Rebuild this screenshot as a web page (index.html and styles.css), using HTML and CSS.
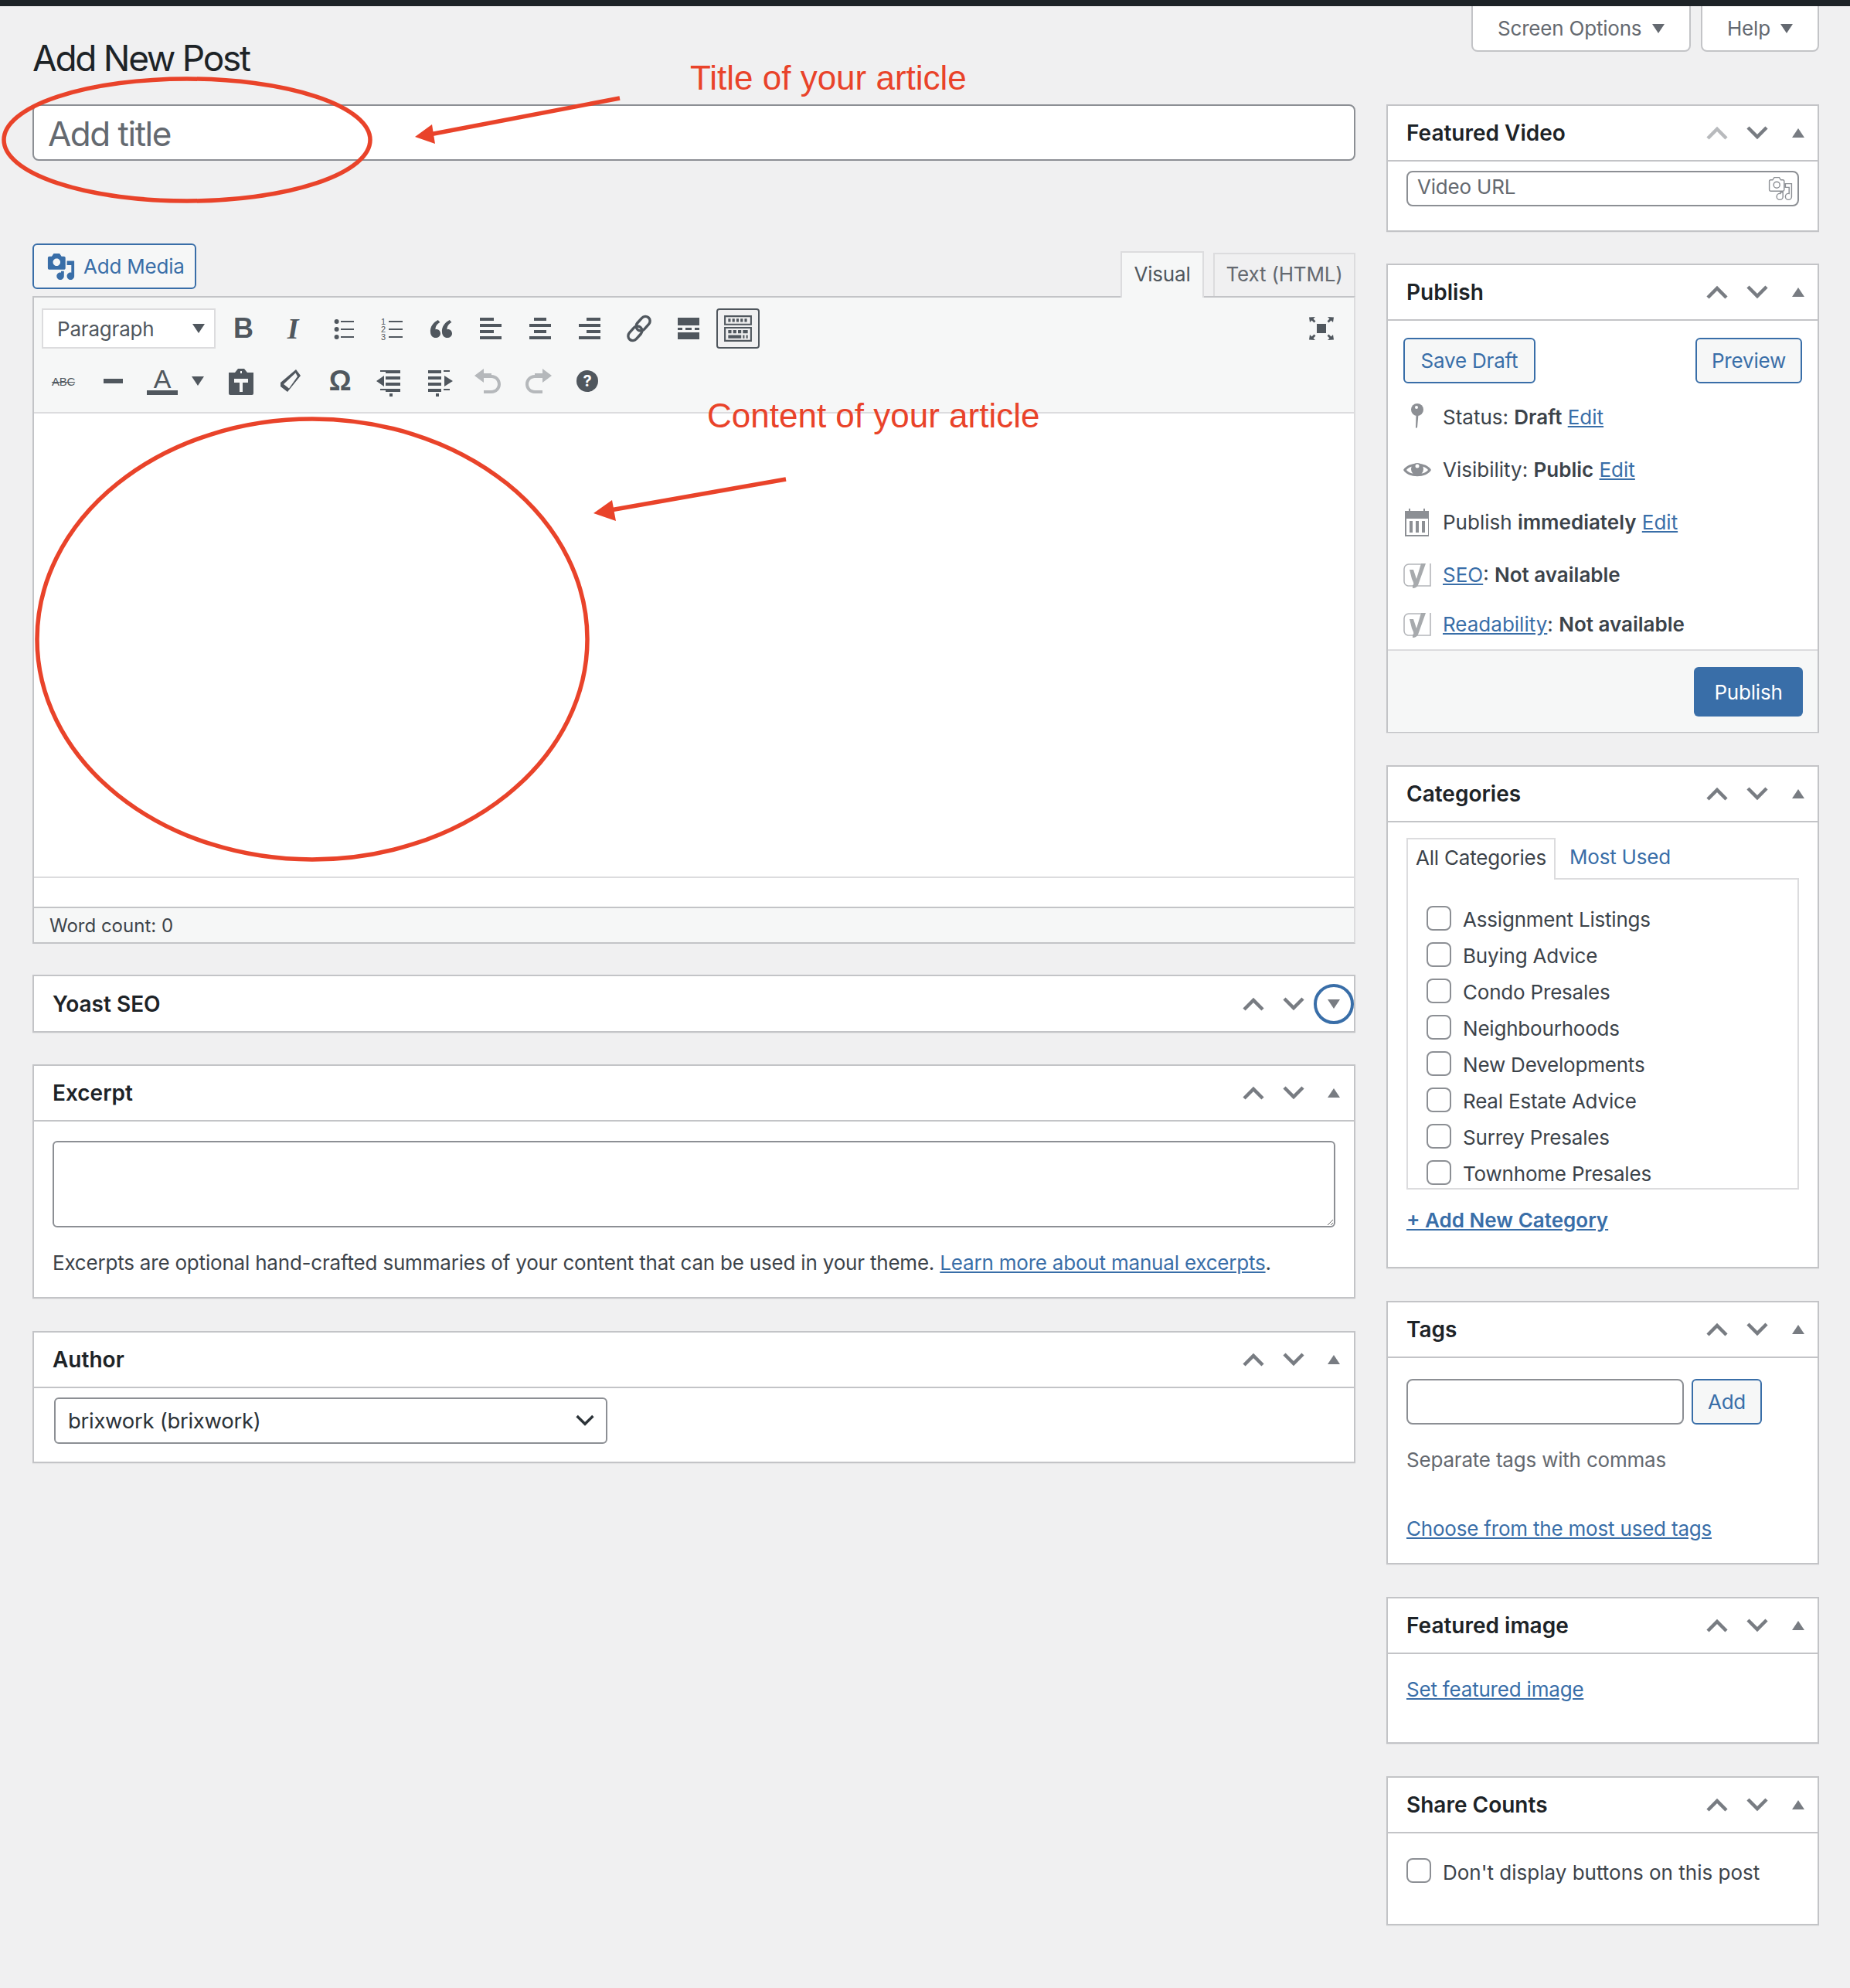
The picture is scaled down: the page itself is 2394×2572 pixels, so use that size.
FILE: index.html
```html
<!DOCTYPE html>
<html lang="en">
<head>
  <meta charset="UTF-8">
  <meta name="viewport" content="width=device-width, initial-scale=1.0">
  <title>Add New Post</title>
  <link rel="stylesheet" href="styles.css">
</head>
<body>

  <!-- shared icons -->
  <svg class="sprite" width="0" height="0">
    <defs>
      <symbol id="i-up" viewBox="0 0 30 20"><path d="M3 17 15 5l12 12" fill="none" stroke="currentColor" stroke-width="4.5"/></symbol>
      <symbol id="i-down" viewBox="0 0 30 20"><path d="M3 3l12 12L27 3" fill="none" stroke="currentColor" stroke-width="4.5"/></symbol>
      <symbol id="i-media" viewBox="0 0 20 20"><path fill-rule="evenodd" d="M13 11V4c0-.55-.45-1-1-1h-1.670L9 1H5L3.670 3H2c-.55 0-1 .45-1 1v7c0 .55.45 1 1 1h10c.55 0 1-.45 1-1zM7 4.500c1.380 0 2.500 1.120 2.500 2.500S8.380 9.500 7 9.500 4.500 8.380 4.500 7 5.620 4.500 7 4.500zM14 6h5v10.500c0 1.380-1.120 2.500-2.500 2.500S14 17.880 14 16.500s1.120-2.500 2.500-2.500c.17 0 .34.02.5.05V9h-3V6zm-4 8.050V13h2v3.500c0 1.380-1.120 2.500-2.500 2.500S7 17.880 7 16.500 8.120 14 9.500 14c.17 0 .34.02.5.05z"/></symbol>
      <symbol id="i-yoast" viewBox="0 0 40 40">
        <path d="M27 7H9a6 6 0 0 0-6 6v16a6 6 0 0 0 5 6h29V6" fill="none" stroke="#b4b6ba" stroke-width="1.600"/>
        <path d="M10 14h5l4 12 6-20h6l-10 28q-2 4-7 4v-4q3 0-1-8z" fill="#a7aaad"/>
      </symbol>
    </defs>
  </svg>

  <div class="page">
    <div class="top-bar"></div>

    <div class="screen-meta">
      <div class="meta-tab">Screen Options <span class="tri-down"></span></div>
      <div class="meta-tab meta-tab-help">Help <span class="tri-down"></span></div>
    </div>

    <div class="columns">
      <div class="main-col">
        <h1 class="page-title">Add New Post</h1>
        <div class="title-input">Add title</div>

        <div class="media-row">
          <div class="btn btn-media"><svg class="media-icon"><use href="#i-media"/></svg>Add Media</div>
          <div class="editor-tabs">
            <div class="editor-tab editor-tab-active">Visual</div>
            <div class="editor-tab">Text (HTML)</div>
          </div>
        </div>

        <div class="editor">
          <div class="toolbar">
            <div class="tool-row">
              <div class="format-select">Paragraph <span class="tri-down tri-dark"></span></div>
              <div class="tool"><span class="glyph-b">B</span></div>
              <div class="tool"><span class="glyph-i">I</span></div>
              <div class="tool"><svg class="tool-icon" viewBox="0 0 20 20"><circle cx="6.300" cy="5.500" r="1.500"/><circle cx="6.300" cy="10.500" r="1.500"/><circle cx="6.300" cy="15.500" r="1.500"/><path d="M9 5h8.500v1H9zM9 10h8.500v1H9zM9 15h8.500v1H9z"/></svg></div>
              <div class="tool"><svg class="tool-icon" viewBox="0 0 20 20"><text x="3" y="7.400" class="num">1</text><text x="3" y="12.400" class="num">2</text><text x="3" y="17.400" class="num">3</text><path d="M8 5h9v1H8zM8 10h9v1H8zM8 15h9v1H8z"/></svg></div>
              <div class="tool"><svg class="tool-icon" viewBox="0 0 20 20"><path d="M9.500 13.200c0-1.900-1.700-3-3.200-2.600-.3-1.600 1.100-3.700 2.900-4.600L7.900 4.500C5.200 5.800 2.500 8.800 3 12.500 3.200 14.900 4.600 16 6.300 16c1.800 0 3.200-1.200 3.200-2.800z"/><path d="M17 13.200c0-1.900-1.700-3-3.200-2.600-.3-1.600 1.100-3.700 2.900-4.600l-1.300-1.500c-2.700 1.300-5.400 4.300-4.900 8 .2 2.400 1.600 3.500 3.300 3.500 1.800 0 3.200-1.200 3.200-2.800z"/></svg></div>
              <div class="tool"><svg class="tool-icon" viewBox="0 0 20 20"><path d="M12 5V3H3v2h9zm5 4V7H3v2h14zm-5 4v-2H3v2h9zm5 4v-2H3v2h14z"/></svg></div>
              <div class="tool"><svg class="tool-icon" viewBox="0 0 20 20"><path d="M14 5V3H6v2h8zm3 4V7H3v2h14zm-3 4v-2H6v2h8zm3 4v-2H3v2h14z"/></svg></div>
              <div class="tool"><svg class="tool-icon" viewBox="0 0 20 20"><path d="M17 5V3H8v2h9zm0 4V7H3v2h14zm0 4v-2H8v2h9zm0 4v-2H3v2h14z"/></svg></div>
              <div class="tool"><svg class="tool-icon" viewBox="0 0 20 20"><g fill="none" stroke="currentColor" stroke-width="1.700"><rect x="9.600" y="1.600" width="6" height="10.500" rx="3" transform="rotate(42 12.600 6.800)"/><rect x="4.400" y="7.900" width="6" height="10.500" rx="3" transform="rotate(42 7.400 13.200)"/></g></svg></div>
              <div class="tool"><svg class="tool-icon" viewBox="0 0 20 20"><path d="M3 3h14v5H3zM3 9.500h3v1.500H3zM8 9.500h4v1.500H8zM14 9.500h3v1.500h-3zM3 12.500h14V17H3z"/></svg></div>
              <div class="tool tool-on"><svg class="tool-icon tool-icon-wide" viewBox="0 0 36 36"><path fill-rule="evenodd" d="M1 2h34v12H1zM3 4v8h30V4zM1 16h34v18H1zM3 18v14h30V18z"/><path d="M6 6h3v4H6zM11 6h3v4h-3zM16 6h3v4h-3zM21 6h3v4h-3zM26 6h3v4h-3zM6 20h4v4H6zM12 20h4v4h-4zM18 20h4v4h-4zM24 20h6v4h-6zM6 26h16v4H6zM24 26h2v4h-2zM28 26h2v4h-2z"/></svg></div>
              <div class="tool tool-right"><svg class="tool-icon" viewBox="0 0 40 40"><path d="M14 14h12v12H14zM4 5.500 12 5l-2.500 2.500 3 3-2 2-3-3L5 12zM36 5.500 28 5l2.500 2.500-3 3 2 2 3-3L35 12zM4 34.500l8 .5-2.500-2.500 3-3-2-2-3 3L5 28zM36 34.500l-8 .5 2.500-2.500-3-3 2-2 3 3 2.500-2.500z"/></svg></div>
            </div>
            <div class="tool-row">
              <div class="tool"><span class="glyph-abc">ABC</span></div>
              <div class="tool"><span class="glyph-hr"></span></div>
              <div class="tool tool-color"><span class="glyph-a">A</span><span class="color-bar"></span></div>
              <div class="color-arrow"><span class="tri-down tri-dark"></span></div>
              <div class="tool"><svg class="tool-icon" viewBox="0 0 40 40"><path fill-rule="evenodd" d="M4 9h8l4-5h8l4 5h8v27a2 2 0 0 1-2 2H6a2 2 0 0 1-2-2zM11 17v5h7v12h4V22h7v-5zM19 7v3h2V7z"/></svg></div>
              <div class="tool"><svg class="tool-icon" viewBox="0 0 40 40"><path fill-rule="evenodd" d="M27 5l6 8-17 21-9-7v-5zM26.500 9.500 11 24l7 5.500 11-15.500z"/></svg></div>
              <div class="tool"><span class="glyph-omega">Ω</span></div>
              <div class="tool"><svg class="tool-icon" viewBox="0 0 20 20"><path d="M4 3h3.500v1H4zM7.500 3H17v2H7.500zM7.500 7H17v2H7.500zM7.500 11H17v2H7.500zM4 15h3.500v1H4zM7.500 15H17v2H7.500zM10 18h2v2h-2zM6.500 6.500v7L1.500 10z"/></svg></div>
              <div class="tool"><svg class="tool-icon" viewBox="0 0 20 20"><path d="M3 3h8.500v2H3zM13 3h4v1h-4zM3 7h8.500v2H3zM3 11h8.500v2H3zM3 15h8.500v2H3zM13 15h4v1h-4zM8 18h2v2H8zM13.500 6.500v7l5.500-3.500z"/></svg></div>
              <div class="tool"><svg class="tool-icon tool-off" viewBox="0 0 20 20"><path d="M12 5H7V2L1 6.500 7 11V8h5c2.200 0 4 1.800 4 4s-1.800 4-4 4H7v2h5c3.310 0 6-2.690 6-6s-2.690-6-6-6z"/></svg></div>
              <div class="tool"><svg class="tool-icon tool-off" viewBox="0 0 20 20"><path d="M8 5h5V2l6 4.500-6 4.500V8H8c-2.200 0-4 1.800-4 4s1.800 4 4 4h5v2H8c-3.310 0-6-2.690-6-6s2.690-6 6-6z"/></svg></div>
              <div class="tool"><span class="glyph-help">?</span></div>
            </div>
          </div>
          <div class="editor-content"></div>
          <div class="editor-spacer"></div>
          <div class="editor-status">Word count: 0</div>
        </div>

        <div class="postbox postbox-yoast">
          <div class="postbox-head">
            <h2>Yoast SEO</h2>
            <div class="handles">
              <span class="handle"><svg class="chevron"><use href="#i-up"/></svg></span>
              <span class="handle"><svg class="chevron"><use href="#i-down"/></svg></span>
              <span class="handle handle-focus"><span class="tri-down tri-gray"></span></span>
            </div>
          </div>
        </div>

        <div class="postbox">
          <div class="postbox-head">
            <h2>Excerpt</h2>
            <div class="handles">
              <span class="handle"><svg class="chevron"><use href="#i-up"/></svg></span>
              <span class="handle"><svg class="chevron"><use href="#i-down"/></svg></span>
              <span class="handle"><span class="tri-up"></span></span>
            </div>
          </div>
          <div class="excerpt-body">
            <textarea class="excerpt-area"></textarea>
            <p class="excerpt-note">Excerpts are optional hand-crafted summaries of your content that can be used in your theme. <a href="#">Learn more about manual excerpts</a>.</p>
          </div>
        </div>

        <div class="postbox postbox-author">
          <div class="postbox-head">
            <h2>Author</h2>
            <div class="handles">
              <span class="handle"><svg class="chevron"><use href="#i-up"/></svg></span>
              <span class="handle"><svg class="chevron"><use href="#i-down"/></svg></span>
              <span class="handle"><span class="tri-up"></span></span>
            </div>
          </div>
          <div class="author-body">
            <div class="author-select">brixwork (brixwork)
              <svg class="author-chevron" viewBox="0 0 30 20"><path d="M3 3l12 12L27 3" fill="none" stroke="#2c3338" stroke-width="4"/></svg>
            </div>
          </div>
        </div>
      </div>

      <div class="side-col">
        <div class="postbox box-video">
          <div class="postbox-head">
            <h2>Featured Video</h2>
            <div class="handles">
              <span class="handle"><svg class="chevron chevron-off"><use href="#i-up"/></svg></span>
              <span class="handle"><svg class="chevron"><use href="#i-down"/></svg></span>
              <span class="handle"><span class="tri-up"></span></span>
            </div>
          </div>
          <div class="video-body">
            <div class="video-input"><span class="video-label">Video URL</span> <svg class="video-icon"><use href="#i-media"/></svg></div>
          </div>
        </div>

        <div class="postbox box-publish">
          <div class="postbox-head">
            <h2>Publish</h2>
            <div class="handles">
              <span class="handle"><svg class="chevron"><use href="#i-up"/></svg></span>
              <span class="handle"><svg class="chevron"><use href="#i-down"/></svg></span>
              <span class="handle"><span class="tri-up"></span></span>
            </div>
          </div>
          <div class="publish-actions">
            <div class="btn btn-draft">Save Draft</div>
            <div class="btn btn-preview">Preview</div>
          </div>
          <div class="misc-row">
            <svg class="misc-icon" viewBox="0 0 40 40"><circle cx="20" cy="11" r="8" fill="#8c8f94"/><circle cx="19" cy="8" r="2" fill="#fff"/><path d="M18.500 17h3L20 34l-2 1z" fill="#8c8f94"/></svg>
            <span>Status: <b>Draft</b> <a href="#">Edit</a></span>
          </div>
          <div class="misc-row">
            <svg class="misc-icon" viewBox="0 0 40 40"><path d="M2 21C8 10 32 10 38 21 32 32 8 32 2 21z" fill="#8c8f94"/><path d="M6 21c5-7 23-7 28 0-5 7-23 7-28 0z" fill="#fff"/><circle cx="20" cy="20" r="8" fill="#8c8f94"/><circle cx="20" cy="16" r="2.500" fill="#fff"/></svg>
            <span>Visibility: <b>Public</b> <a href="#">Edit</a></span>
          </div>
          <div class="misc-row">
            <svg class="misc-icon" viewBox="0 0 40 40"><path fill-rule="evenodd" d="M4 6h5V3h2v3h17V3h2v3h5v33H4zM6 16v21h28V16z" fill="#8c8f94"/><path d="M10 19h4v15h-4zM18 19h4v15h-4zM26 19h4v15h-4z" fill="#8c8f94"/></svg>
            <span>Publish <b>immediately</b> <a href="#">Edit</a></span>
          </div>
          <div class="misc-row">
            <svg class="misc-icon"><use href="#i-yoast"/></svg>
            <span><a href="#">SEO</a>: <b>Not available</b></span>
          </div>
          <div class="misc-row misc-row-last">
            <svg class="misc-icon"><use href="#i-yoast"/></svg>
            <span><a href="#">Readability</a>: <b>Not available</b></span>
          </div>
          <div class="publish-footer">
            <div class="btn-primary">Publish</div>
          </div>
        </div>

        <div class="postbox box-categories">
          <div class="postbox-head">
            <h2>Categories</h2>
            <div class="handles">
              <span class="handle"><svg class="chevron"><use href="#i-up"/></svg></span>
              <span class="handle"><svg class="chevron"><use href="#i-down"/></svg></span>
              <span class="handle"><span class="tri-up"></span></span>
            </div>
          </div>
          <div class="cat-body">
            <div class="cat-tabs">
              <div class="cat-tab">All Categories</div>
              <a class="cat-link" href="#">Most Used</a>
            </div>
            <div class="cat-list">
              <label class="cat-item"><input type="checkbox" class="check">Assignment Listings</label>
              <label class="cat-item"><input type="checkbox" class="check">Buying Advice</label>
              <label class="cat-item"><input type="checkbox" class="check">Condo Presales</label>
              <label class="cat-item"><input type="checkbox" class="check">Neighbourhoods</label>
              <label class="cat-item"><input type="checkbox" class="check">New Developments</label>
              <label class="cat-item"><input type="checkbox" class="check">Real Estate Advice</label>
              <label class="cat-item"><input type="checkbox" class="check">Surrey Presales</label>
              <label class="cat-item"><input type="checkbox" class="check">Townhome Presales</label>
            </div>
            <a class="cat-add" href="#">+ Add New Category</a>
          </div>
        </div>

        <div class="postbox box-tags">
          <div class="postbox-head">
            <h2>Tags</h2>
            <div class="handles">
              <span class="handle"><svg class="chevron"><use href="#i-up"/></svg></span>
              <span class="handle"><svg class="chevron"><use href="#i-down"/></svg></span>
              <span class="handle"><span class="tri-up"></span></span>
            </div>
          </div>
          <div class="tags-body">
            <div class="tags-row">
              <div class="tags-input"></div>
              <div class="btn btn-add">Add</div>
            </div>
            <p class="tags-hint">Separate tags with commas</p>
            <a class="tags-link" href="#">Choose from the most used tags</a>
          </div>
        </div>

        <div class="postbox box-image">
          <div class="postbox-head">
            <h2>Featured image</h2>
            <div class="handles">
              <span class="handle"><svg class="chevron"><use href="#i-up"/></svg></span>
              <span class="handle"><svg class="chevron"><use href="#i-down"/></svg></span>
              <span class="handle"><span class="tri-up"></span></span>
            </div>
          </div>
          <div class="image-body"><a href="#">Set featured image</a></div>
        </div>

        <div class="postbox box-share">
          <div class="postbox-head">
            <h2>Share Counts</h2>
            <div class="handles">
              <span class="handle"><svg class="chevron"><use href="#i-up"/></svg></span>
              <span class="handle"><svg class="chevron"><use href="#i-down"/></svg></span>
              <span class="handle"><span class="tri-up"></span></span>
            </div>
          </div>
          <label class="share-body"><input type="checkbox" class="check">Don't display buttons on this post</label>
        </div>
      </div>
    </div>

    <!-- red notes drawn on top of the screenshot -->
    <svg class="notes" viewBox="0 0 2394 2572">
      <ellipse cx="242" cy="181" rx="237" ry="79" class="note-line"/>
      <ellipse cx="404" cy="827" rx="356" ry="285" class="note-line"/>
      <path d="M802 127 556 174" class="note-line"/>
      <path d="M537 177 559 161 563 186z" class="note-fill"/>
      <path d="M1017 620 790 660" class="note-line"/>
      <path d="M768 664 792 647 797 674z" class="note-fill"/>
    </svg>
    <div class="note note-title">Title of your article</div>
    <div class="note note-content">Content of your article</div>
  </div>

</body>
</html>
```

FILE: styles.css
```css
* {
  box-sizing: border-box;
}
body {
  margin: 0;
  background-color: #f0f0f1;
  color: #3c434a;
  font-family: Inter, "Noto Sans", sans-serif;
  font-size: 26px;
  letter-spacing: -0.2px;
}
a {
  color: #396ea8;
}
p {
  margin: 0;
}
.sprite {
  position: absolute;
}
.page {
  position: relative;
  width: 2394px;
  height: 2572px;
  overflow: hidden;
}
.top-bar {
  height: 8px;
  background-color: #1d2327;
}

/* screen options tabs */
.screen-meta {
  display: flex;
  justify-content: flex-end;
  gap: 13px;
  height: 59px;
  padding-right: 40px;
}
.meta-tab {
  display: flex;
  align-items: center;
  justify-content: space-between;
  width: 284px;
  padding: 0 32px;
  background-color: #fff;
  border: 2px solid #c3c4c7;
  border-top: none;
  border-radius: 0 0 8px 8px;
  color: #646970;
}
.meta-tab-help {
  width: 153px;
}
.tri-down {
  display: inline-block;
  width: 0;
  height: 0;
  border-left: 8px solid transparent;
  border-right: 8px solid transparent;
  border-top: 12px solid #646970;
}
.tri-dark {
  border-top-color: #50575e;
}
.tri-gray {
  border-top-color: #787c82;
}
.tri-up {
  display: inline-block;
  width: 0;
  height: 0;
  border-left: 8px solid transparent;
  border-right: 8px solid transparent;
  border-bottom: 12px solid #787c82;
}
.side-col .tri-up {
  margin-left: 2px;
}

/* page columns */
.columns {
  display: grid;
  grid-template-columns: 1712px 560px;
  gap: 40px;
  padding-left: 42px;
}
.main-col {
  display: flex;
  flex-direction: column;
}
.side-col {
  display: flex;
  flex-direction: column;
  gap: 42px;
  padding-top: 68px;
}
.page-title {
  height: 68px;
  margin: 0;
  color: #1d2327;
  font-size: 46px;
  font-weight: 400;
  letter-spacing: -2.3px;
  line-height: 16px;
}
.title-input {
  display: flex;
  align-items: center;
  height: 73px;
  padding: 2px 0 0 18px;
  background-color: #fff;
  border: 2px solid #8c8f94;
  border-radius: 8px;
  color: #646970;
  font-size: 44px;
  letter-spacing: -1.5px;
}

/* buttons */
.btn {
  display: flex;
  align-items: center;
  justify-content: center;
  height: 59px;
  background-color: #f6f7f7;
  border: 2px solid #396ea8;
  border-radius: 6px;
  color: #396ea8;
}
.btn-media {
  justify-content: flex-start;
  width: 212px;
  gap: 10px;
  padding-left: 16px;
}
.media-icon {
  width: 38px;
  height: 38px;
  fill: #396ea8;
}
.btn-primary {
  display: flex;
  align-items: center;
  justify-content: center;
  width: 141px;
  height: 64px;
  background-color: #396ea8;
  border-radius: 6px;
  color: #fff;
}

/* editor */
.media-row {
  display: flex;
  justify-content: space-between;
  height: 70px;
  margin-top: 107px;
  margin-bottom: -2px;
}
.editor-tabs {
  display: flex;
  align-items: flex-end;
  gap: 12px;
  padding-top: 12px;
}
.editor-tab {
  display: flex;
  align-items: center;
  justify-content: center;
  width: 184px;
  height: 58px;
  padding-bottom: 4px;
  background-color: #f0f0f1;
  border: 2px solid #dcdcde;
  color: #646970;
}
.editor-tab-active {
  position: relative;
  width: 108px;
  height: 60px;
  background-color: #f6f7f7;
  border-bottom: none;
  color: #50575e;
}
.editor {
  border: 2px solid #c3c4c7;
  border-right-color: #dcdcde;
}
.toolbar {
  display: flex;
  flex-direction: column;
  gap: 16px;
  height: 150px;
  padding: 14px 14px 0 10px;
  background-color: #f6f7f7;
  border-bottom: 2px solid #dcdcde;
}
.tool-row {
  display: flex;
  align-items: center;
  gap: 8px;
  height: 52px;
}
.format-select {
  display: flex;
  align-items: center;
  justify-content: space-between;
  width: 225px;
  height: 52px;
  padding: 0 12px 0 18px;
  background-color: #fff;
  border: 2px solid #dcdcde;
  color: #50575e;
}
.tool {
  display: flex;
  align-items: center;
  justify-content: center;
  width: 56px;
  height: 52px;
  color: #50575e;
}
.tool-on {
  background-color: #f0f0f1;
  border: 2px solid #50575e;
  border-radius: 4px;
}
.tool-right {
  margin-left: auto;
}
.tool-icon {
  width: 40px;
  height: 40px;
  fill: currentColor;
}
.tool-icon-wide {
  width: 38px;
  height: 38px;
}
.tool-off {
  color: #b5b8bb;
}
.num {
  font-family: "Liberation Sans", sans-serif;
  font-size: 5.5px;
}
.glyph-b {
  font-family: "Liberation Sans", sans-serif;
  font-size: 36px;
  font-weight: 700;
}
.glyph-i {
  font-family: "Liberation Serif", serif;
  font-size: 38px;
  font-style: italic;
  font-weight: 700;
}
.glyph-abc {
  font-family: "Liberation Sans", sans-serif;
  font-size: 15px;
  text-decoration: line-through;
}
.glyph-hr {
  width: 25px;
  height: 6px;
  background-color: #50575e;
}
.tool-color {
  flex-direction: column;
  gap: 0;
}
.glyph-a {
  height: 30px;
  font-family: "Liberation Sans", sans-serif;
  font-size: 34px;
  line-height: 30px;
}
.color-bar {
  width: 40px;
  height: 6px;
  background-color: #50575e;
}
.color-arrow {
  display: flex;
  justify-content: center;
  width: 20px;
  margin-right: 10px;
}
.glyph-omega {
  font-family: "Liberation Sans", sans-serif;
  font-size: 36px;
  font-weight: 700;
}
.glyph-help {
  width: 28px;
  height: 28px;
  background-color: #50575e;
  border-radius: 50%;
  color: #fff;
  font-size: 20px;
  font-weight: 700;
  line-height: 28px;
  text-align: center;
}
.editor-content {
  height: 601px;
  background-color: #fff;
  border-bottom: 2px solid #dcdcde;
}
.editor-spacer {
  height: 37px;
  background-color: #fff;
}
.editor-status {
  display: flex;
  align-items: center;
  height: 46px;
  padding-left: 20px;
  background-color: #f6f7f7;
  border-top: 2px solid #c3c4c7;
  color: #3c434a;
  font-size: 24px;
  letter-spacing: 0;
}

/* meta boxes */
.postbox {
  background-color: #fff;
  border: 2px solid #c3c4c7;
  box-shadow: 0 1px 1px rgba(0, 0, 0, 0.04);
}
.postbox-yoast {
  height: 75px;
  margin: 40px 0 41px;
}
.postbox-yoast .postbox-head {
  height: 71px;
  border-bottom: none;
}
.postbox-author {
  height: 171px;
  margin-top: 42px;
}
.postbox-head {
  display: flex;
  align-items: center;
  justify-content: space-between;
  height: 72px;
  padding-left: 24px;
  border-bottom: 2px solid #c3c4c7;
  letter-spacing: 0;
}
.postbox-head h2 {
  margin: 0;
  color: #1d2327;
  font-size: 28px;
  font-weight: 600;
}
.handles {
  display: flex;
}
.handle {
  display: flex;
  align-items: center;
  justify-content: center;
  width: 52px;
  height: 52px;
  border-radius: 50%;
  color: #787c82;
}
.handle-focus {
  border: 4px solid #396ea8;
}
.chevron {
  width: 30px;
  height: 20px;
}
.chevron-off {
  color: #b8babd;
}
.excerpt-body {
  height: 227px;
  padding: 25px 24px 0;
}
.excerpt-area {
  display: block;
  width: 100%;
  height: 112px;
  background-color: #fff;
  border: 2px solid #8c8f94;
  border-radius: 6px;
}
.excerpt-note {
  margin-top: 29px;
  line-height: 34px;
}
.author-body {
  padding: 12px 26px 0;
}
.author-select {
  display: flex;
  align-items: center;
  justify-content: space-between;
  width: 716px;
  height: 60px;
  padding: 0 14px 0 16px;
  border: 2px solid #8c8f94;
  border-radius: 6px;
  color: #2c3338;
  font-size: 27.5px;
  letter-spacing: -0.3px;
}
.author-chevron {
  width: 26px;
  height: 18px;
}

/* sidebar */
.box-video {
  height: 165px;
  margin-bottom: -1px;
}
.video-body {
  padding: 12px 24px 0;
}
.video-input {
  display: flex;
  align-items: center;
  justify-content: space-between;
  height: 46px;
  padding: 0 6px 0 12px;
  border: 2px solid #8c8f94;
  border-radius: 8px;
  color: #646970;
}
.video-label {
  padding-bottom: 5px;
}
.video-icon {
  width: 32px;
  height: 32px;
  fill: #fff;
  stroke: #8c8f94;
  stroke-width: 0.9;
}
.box-publish {
  height: 607px;
}
.publish-actions {
  display: flex;
  justify-content: space-between;
  height: 90px;
  padding: 22px 20px 0;
}
.btn-draft {
  width: 171px;
}
.btn-preview {
  width: 138px;
}
.misc-row {
  display: flex;
  align-items: center;
  gap: 13px;
  height: 68px;
  padding-left: 18px;
  letter-spacing: 0;
}
.misc-row-last {
  height: 60px;
}
.misc-row b {
  font-weight: 600;
}
.misc-icon {
  flex-shrink: 0;
  width: 40px;
  height: 40px;
}
.publish-footer {
  display: flex;
  justify-content: flex-end;
  height: 107px;
  margin-top: 3px;
  padding: 21px 19px 0;
  background-color: #f6f7f7;
  border-top: 2px solid #dcdcde;
}
.box-categories {
  height: 651px;
}
.cat-body {
  padding: 20px 24px 0;
}
.cat-tabs {
  display: flex;
  align-items: center;
  height: 54px;
  margin-bottom: -2px;
}
.cat-tab {
  position: relative;
  display: flex;
  align-items: center;
  justify-content: center;
  width: 193px;
  height: 54px;
  padding-bottom: 6px;
  background-color: #fff;
  border: 2px solid #dcdcde;
  border-bottom: none;
}
.cat-tab + .cat-link {
  margin: 0 0 6px 18px;
  text-decoration: none;
}
.cat-list {
  height: 403px;
  padding: 28px 0 0 24px;
  overflow: hidden;
  border: 2px solid #dcdcde;
}
.cat-item {
  display: flex;
  align-items: center;
  gap: 15px;
  height: 47px;
}
.check {
  appearance: none;
  flex-shrink: 0;
  width: 32px;
  height: 32px;
  margin: 0 0 4px;
  background-color: #fff;
  border: 2px solid #8c8f94;
  border-radius: 8px;
}
.cat-add {
  display: block;
  margin-top: 24px;
  font-weight: 600;
  letter-spacing: 0;
}
.box-tags {
  height: 341px;
}
.tags-body {
  padding: 27px 24px 0;
}
.tags-row {
  display: flex;
  gap: 10px;
}
.tags-input {
  width: 359px;
  height: 59px;
  background-color: #fff;
  border: 2px solid #8c8f94;
  border-radius: 8px;
}
.btn-add {
  width: 91px;
}
.tags-hint {
  margin-top: 30px;
  color: #646970;
}
.tags-link {
  display: block;
  margin-top: 58px;
}
.box-image {
  height: 190px;
}
.image-body {
  padding: 30px 24px 0;
}
.box-share {
  height: 193px;
}
.share-body {
  display: flex;
  align-items: center;
  gap: 15px;
  padding: 32px 24px 0;
  letter-spacing: 0;
}

/* red notes */
.notes {
  position: absolute;
  top: 0;
  left: 0;
  width: 2394px;
  height: 2572px;
  pointer-events: none;
}
.note-line {
  fill: none;
  stroke: #e9432a;
  stroke-width: 5.5;
}
.note-fill {
  fill: #e9432a;
}
.note {
  position: absolute;
  color: #e9432a;
  font-family: "Liberation Sans", sans-serif;
  font-size: 44px;
  letter-spacing: 0;
  line-height: 50px;
  white-space: nowrap;
}
.note-title {
  top: 76px;
  left: 893px;
}
.note-content {
  top: 513px;
  left: 915px;
}
```
